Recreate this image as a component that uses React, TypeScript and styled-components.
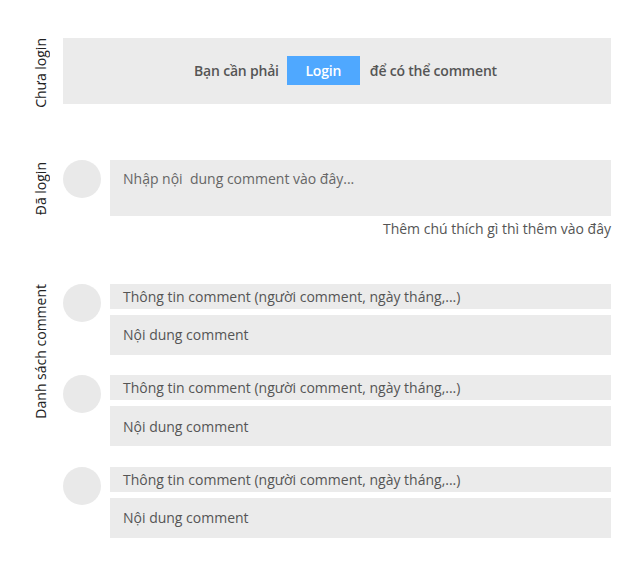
import React from "react";
import styled, { createGlobalStyle } from "styled-components";

const Global = createGlobalStyle`
  html, body { margin: 0; padding: 0; background: #fff; }
  body { font-family: "Open Sans", "Liberation Sans", sans-serif; }
  * { box-sizing: border-box; }
`;

const Page = styled.div`
  width: 640px;
  padding: 38px 29px 0 31px;
  display: flex;
  flex-direction: column;
`;

const Section = styled.section<{ $gap: number }>`
  display: grid;
  grid-template-columns: 19px 1fr;
  column-gap: 13px;
  align-items: start;
  margin-bottom: ${(p) => p.$gap}px;
`;

const SideLabel = styled.div<{ $offset?: number }>`
  writing-mode: vertical-rl;
  transform: rotate(180deg);
  font-size: 14px;
  line-height: 19px;
  color: #222;
  white-space: nowrap;
  margin-top: ${(p) => p.$offset ?? 0}px;
`;

const LoginBox = styled.div`
  height: 66px;
  background: #ebebeb;
  display: flex;
  align-items: center;
  justify-content: center;
  padding-left: 17px;
  padding-bottom: 1px;
  font-size: 14px;
  font-weight: 600;
  color: #555;
  letter-spacing: -0.2px;
`;

const LoginButton = styled.button`
  font-family: inherit;
  font-size: 14px;
  font-weight: 600;
  letter-spacing: -0.2px;
  color: #fff;
  background: #4fa8ff;
  border: none;
  width: 73px;
  height: 29px;
  margin: 0 10px 0 8px;
  padding: 0;
`;

const Block = styled.div`
  display: flex;
  flex-direction: column;
`;

const Row = styled.div`
  display: grid;
  grid-template-columns: 38px 1fr;
  column-gap: 9px;
  align-items: start;
`;

const Avatar = styled.div`
  width: 38px;
  height: 38px;
  border-radius: 50%;
  background: #e9e9e9;
`;

const InputBox = styled.div`
  height: 56px;
  background: #ebebeb;
  padding: 9px 13px;
  font-size: 14px;
  line-height: 19px;
  color: #666;
  white-space: pre;
`;

const Caption = styled.div`
  margin-top: 3px;
  text-align: right;
  font-size: 14px;
  line-height: 19px;
  color: #555;
`;

const CommentList = styled.div`
  display: flex;
  flex-direction: column;
  gap: 20.5px;
`;

const Stack = styled.div`
  display: flex;
  flex-direction: column;
  gap: 6px;
`;

const InfoBar = styled.div`
  height: 25px;
  background: #ebebeb;
  padding: 0 13px;
  display: flex;
  align-items: center;
  font-size: 14px;
  color: #555;
`;

const Body = styled.div`
  height: 40px;
  background: #ebebeb;
  padding: 0 13px;
  display: flex;
  align-items: center;
  font-size: 14px;
  color: #555;
`;

export default function App() {
  return (
    <>
      <Global />
      <Page>
        <Section $gap={52}>
          <SideLabel>Chưa login</SideLabel>
          <LoginBox>
            Bạn cần phải
            <LoginButton>Login</LoginButton>
            để có thể comment
          </LoginBox>
        </Section>

        <Section $gap={46}>
          <SideLabel $offset={2}>Đã login</SideLabel>
          <Block>
            <Row>
              <Avatar />
              <InputBox>{"Nhập nội  dung comment vào đây..."}</InputBox>
            </Row>
            <Caption>Thêm chú thích gì thì thêm vào đây</Caption>
          </Block>
        </Section>

        <Section $gap={0}>
          <SideLabel>Danh sách comment</SideLabel>
          <CommentList>
            {[0, 1, 2].map((i) => (
              <Row key={i}>
                <Avatar />
                <Stack>
                  <InfoBar>Thông tin comment (người comment, ngày tháng,...)</InfoBar>
                  <Body>Nội dung comment</Body>
                </Stack>
              </Row>
            ))}
          </CommentList>
        </Section>
      </Page>
    </>
  );
}
